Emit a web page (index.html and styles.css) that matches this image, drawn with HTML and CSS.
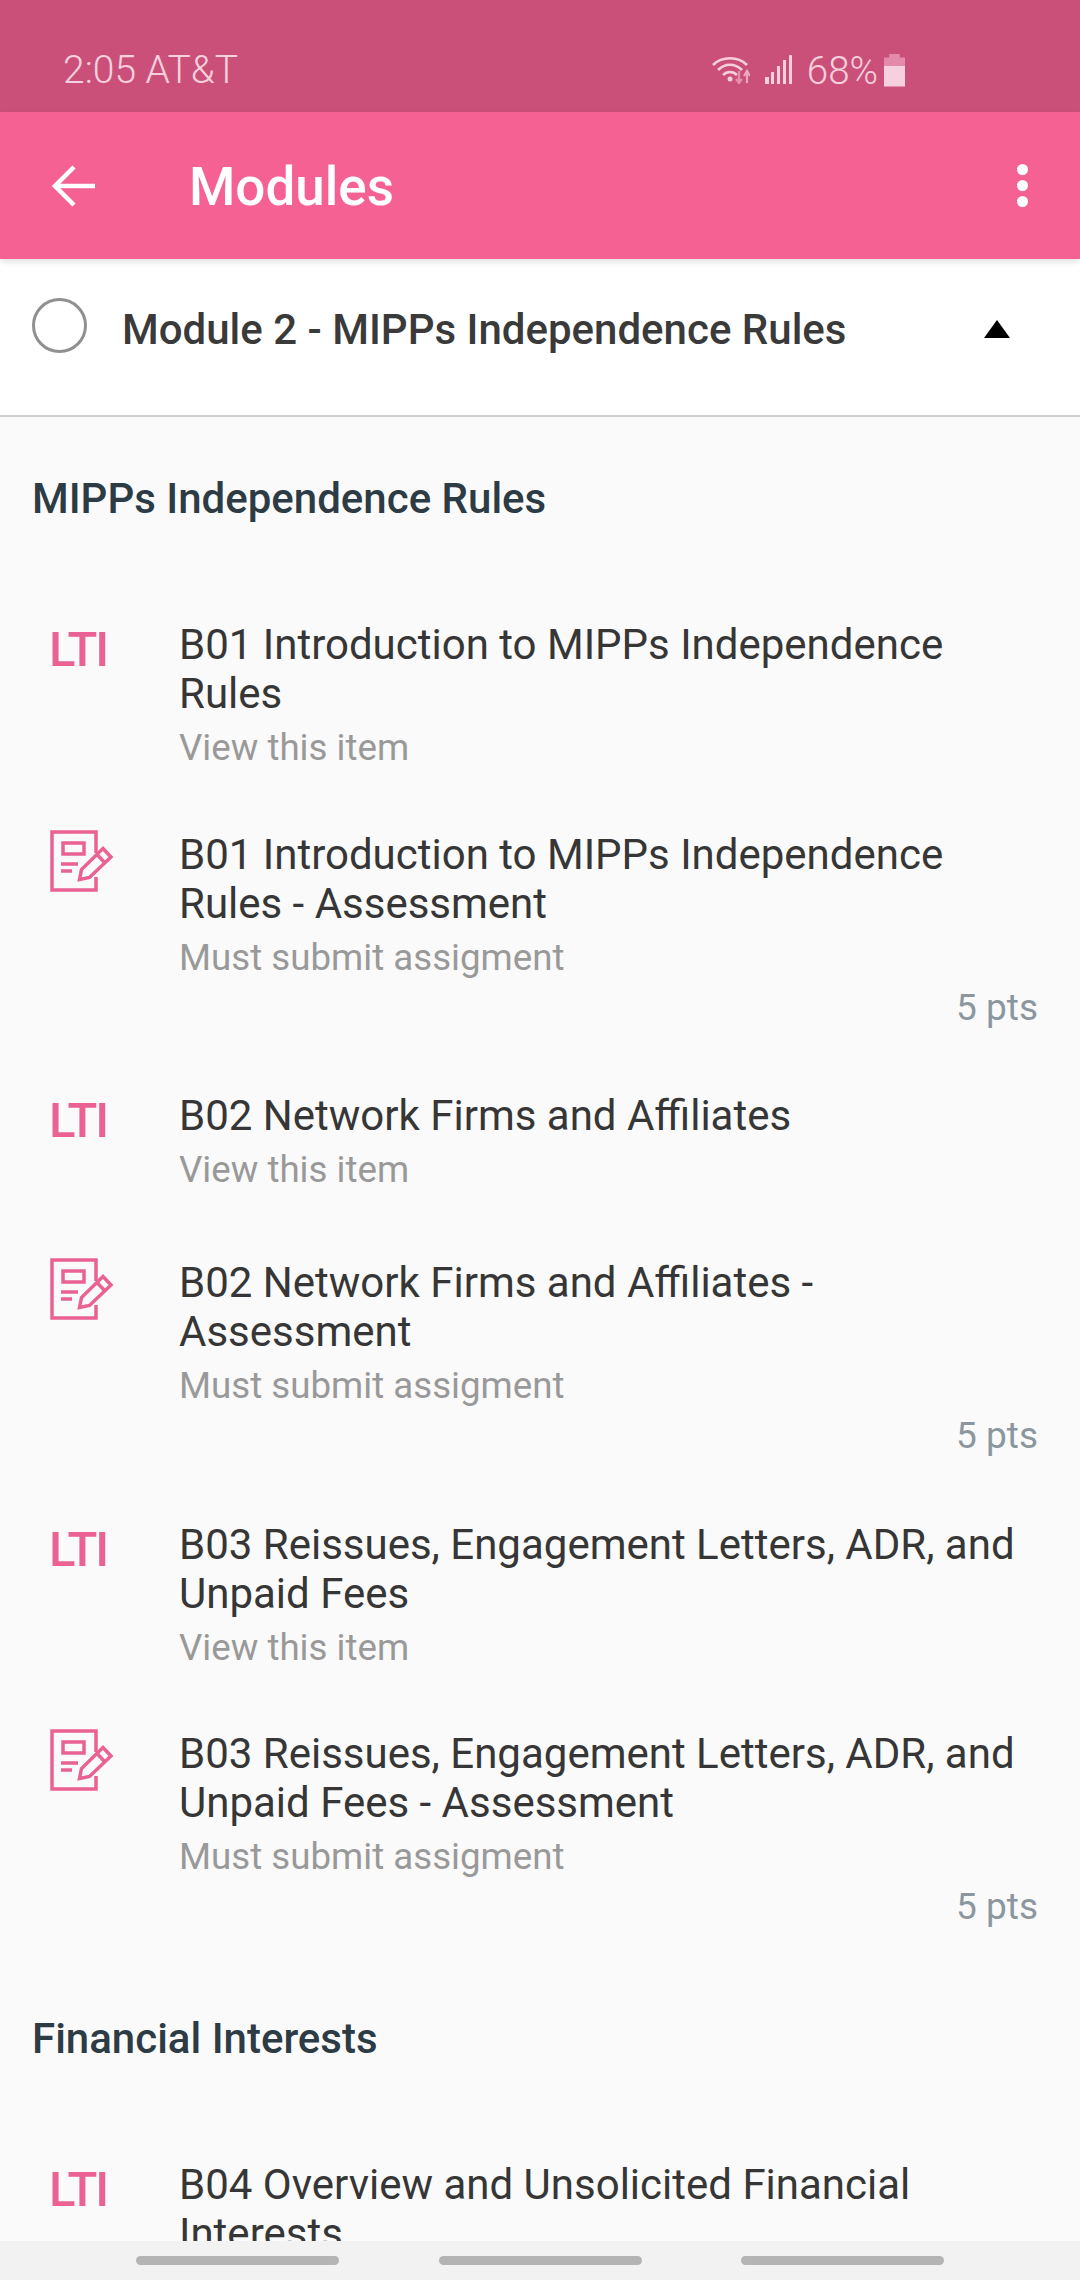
FILE: index.html
```html
<!DOCTYPE html>
<html lang="en">
<head>
    <meta charset="UTF-8">
    <meta name="viewport" content="width=device-width, initial-scale=1.0">
    <title>Modules</title>
    <link rel="stylesheet" href="styles.css">
</head>
<body>

    <svg class="defs" width="0" height="0">
        <symbol id="doc" viewBox="0 0 64 64">
            <g fill="none" stroke="currentColor" stroke-width="3.5">
                <path d="M46 23V2H2V60H46V47"/>
                <rect x="13" y="13" width="21" height="11"/>
                <path d="M11 34H28M11 41H22"/>
                <path d="M29.5 49.5L31.5 39.5L53 18.5L61 27L39.5 47.5Z"/>
                <path d="M47 24.500L55 33"/>
            </g>
        </symbol>
    </svg>

    <div class="status-bar">
        <div class="status-left">2:05 AT&amp;T</div>
        <div class="status-right">
            <svg class="wifi" width="38" height="28" viewBox="0 0 38 28">
                <g fill="none" stroke="#f6d0de" stroke-width="2.6">
                    <path d="M1 9C10 0 26 0 35 9"/>
                    <path d="M6 14C13 7 23 7 30 14"/>
                    <path d="M11 19C15 15 21 15 25 19"/>
                </g>
                <circle cx="18" cy="23" r="2.500" fill="#f6d0de"/>
                <path d="M27 15V26M24 23L27 27L30 23" fill="none" stroke="#e58fae" stroke-width="2.200"/>
                <path d="M35 27V16M32 20L35 15L38 20" fill="none" stroke="#eba8c0" stroke-width="2.200"/>
            </svg>
            <svg class="signal" width="27" height="30" viewBox="0 0 27 30">
                <g fill="#f6d0de">
                    <rect x="0" y="22" width="4" height="7"/>
                    <rect x="6" y="17" width="3" height="12"/>
                    <rect x="12" y="11" width="3" height="18"/>
                    <rect x="18" y="5" width="3" height="24"/>
                    <rect x="24" y="0" width="3" height="29"/>
                </g>
            </svg>
            <span class="battery-text">68%</span>
            <div class="battery"></div>
        </div>
    </div>

    <div class="app-bar">
        <svg class="back" width="44" height="42" viewBox="0 0 44 42">
            <path d="M22 2L3 21L22 40M3 21H43" fill="none" stroke="#fff" stroke-width="4.500"/>
        </svg>
        <div class="app-title">Modules</div>
        <div class="more"><i></i><i></i><i></i></div>
    </div>

    <div class="content">
        <div class="module-head">
            <div class="circle"></div>
            <div class="module-title">Module 2 - MIPPs Independence Rules</div>
            <div class="caret"></div>
        </div>

        <div class="section">
            <div class="section-title">MIPPs Independence Rules</div>

            <div class="item">
                <div class="icon"><span class="lti">LTI</span></div>
                <div class="item-body">
                    <div class="item-title">B01 Introduction to MIPPs Independence Rules</div>
                    <div class="item-sub">View this item</div>
                </div>
            </div>

            <div class="item">
                <div class="icon"><svg class="doc"><use href="#doc"/></svg></div>
                <div class="item-body">
                    <div class="item-title">B01 Introduction to MIPPs Independence Rules - Assessment</div>
                    <div class="item-sub">Must submit assigment</div>
                    <div class="item-pts">5 pts</div>
                </div>
            </div>

            <div class="item">
                <div class="icon"><span class="lti">LTI</span></div>
                <div class="item-body">
                    <div class="item-title">B02 Network Firms and Affiliates</div>
                    <div class="item-sub">View this item</div>
                </div>
            </div>

            <div class="item">
                <div class="icon"><svg class="doc"><use href="#doc"/></svg></div>
                <div class="item-body">
                    <div class="item-title">B02 Network Firms and Affiliates - Assessment</div>
                    <div class="item-sub">Must submit assigment</div>
                    <div class="item-pts">5 pts</div>
                </div>
            </div>

            <div class="item">
                <div class="icon"><span class="lti">LTI</span></div>
                <div class="item-body">
                    <div class="item-title">B03 Reissues, Engagement Letters, ADR, and Unpaid Fees</div>
                    <div class="item-sub">View this item</div>
                </div>
            </div>

            <div class="item">
                <div class="icon"><svg class="doc"><use href="#doc"/></svg></div>
                <div class="item-body">
                    <div class="item-title">B03 Reissues, Engagement Letters, ADR, and Unpaid Fees - Assessment</div>
                    <div class="item-sub">Must submit assigment</div>
                    <div class="item-pts">5 pts</div>
                </div>
            </div>
        </div>

        <div class="section">
            <div class="section-title">Financial Interests</div>

            <div class="item">
                <div class="icon"><span class="lti">LTI</span></div>
                <div class="item-body">
                    <div class="item-title">B04 Overview and Unsolicited Financial Interests</div>
                    <div class="item-sub">View this item</div>
                </div>
            </div>
        </div>
    </div>

    <div class="nav-bar">
        <div class="nav-pill"></div>
        <div class="nav-pill"></div>
        <div class="nav-pill"></div>
    </div>

</body>
</html>
```

FILE: styles.css
```css
* {
    box-sizing: border-box;
}

body {
    font-family: 'Roboto', sans-serif;
    background: #fafafa;
    height: 100vh;
    display: flex;
    flex-direction: column;
    margin: 0;
    overflow: hidden;
}

.defs {
    position: absolute;
}

/* Status bar */
.status-bar {
    flex: none;
    height: 112px;
    background: #cb5079;
    color: #f6d0de;
    display: flex;
    align-items: center;
    justify-content: space-between;
    padding: 28px 175px 0 63px;
    font-size: 39px;
    font-weight: 300;
}

.status-right {
    display: flex;
    align-items: center;
}

.wifi {
    margin-right: 15px;
}

.signal {
    margin-right: 15px;
}

.battery-text {
    font-size: 38.5px;
    margin-right: 6px;
}

.battery {
    width: 21px;
    height: 33px;
    background: linear-gradient(to bottom, #e48bab 0, #e48bab 36%, #f6d0de 36%);
    clip-path: polygon(25% 0, 75% 0, 75% 12%, 100% 12%, 100% 100%, 0 100%, 0 12%, 25% 12%);
}

/* App bar */
.app-bar {
    flex: none;
    position: relative;
    z-index: 1;
    height: 147px;
    background: #f46192;
    color: #fff;
    display: flex;
    align-items: center;
    padding: 0 52px 0 52px;
    box-shadow: 0 3px 6px rgba(0, 0, 0, 0.12);
}

.back {
    margin-right: 94px;
}

.app-title {
    flex: 1;
    font-size: 53px;
    font-weight: 500;
    margin-left: -1px;
    padding-top: 2px;
}

.more i {
    display: block;
    width: 11px;
    height: 11px;
    border-radius: 50%;
    background: #fff;
    margin: 5px 0;
}

/* Content */
.content {
    flex: 1;
    min-height: 0;
    overflow: hidden;
}

.module-head {
    height: 158px;
    background: #fff;
    border-bottom: 2px solid #cfcfcf;
    display: flex;
    align-items: center;
    padding: 0 70px 24px 32px;
}

.circle {
    width: 55px;
    height: 55px;
    border: 3px solid #909090;
    border-radius: 50%;
    margin-right: 35px;
}

.module-title {
    flex: 1;
    font-size: 42px;
    font-weight: 500;
    color: #3a3a3a;
    padding-top: 8px;
}

.caret {
    width: 0;
    height: 0;
    border-left: 13px solid transparent;
    border-right: 13px solid transparent;
    border-bottom: 18px solid #000;
    margin-top: 7px;
}

.section {
    padding-top: 58px;
}

.section + .section {
    padding-top: 56px;
}

.section-title {
    font-size: 42px;
    font-weight: 500;
    line-height: 48px;
    color: #2d3b45;
    padding-left: 32px;
    margin-bottom: 65px;
}

.item {
    display: flex;
    min-height: 167px;
    padding: 32px 42px 25.5px 50px;
}

.icon {
    flex: none;
    width: 129px;
    color: #ea6293;
}

.lti {
    display: block;
    font-size: 49px;
    font-weight: 500;
    line-height: 50px;
    letter-spacing: -2px;
    margin: 5px 0 0 -1px;
}

.doc {
    display: block;
    width: 64px;
    height: 64px;
}

.item-body {
    flex: 1;
}

.item-title {
    font-size: 42px;
    line-height: 49px;
    color: #363636;
}

.item-sub {
    font-size: 36.7px;
    line-height: 48px;
    margin-top: 6px;
    color: #999;
}

.item-pts {
    font-size: 37px;
    line-height: 52px;
    text-align: right;
    color: #8b969e;
}

/* Bottom nav */
.nav-bar {
    flex: none;
    height: 39px;
    background: #f2f2f2;
    display: flex;
    padding: 15px 136px 0;
    justify-content: space-between;
}

.nav-pill {
    width: 203px;
    height: 9px;
    border-radius: 5px;
    background: #b4b4b4;
}
```
